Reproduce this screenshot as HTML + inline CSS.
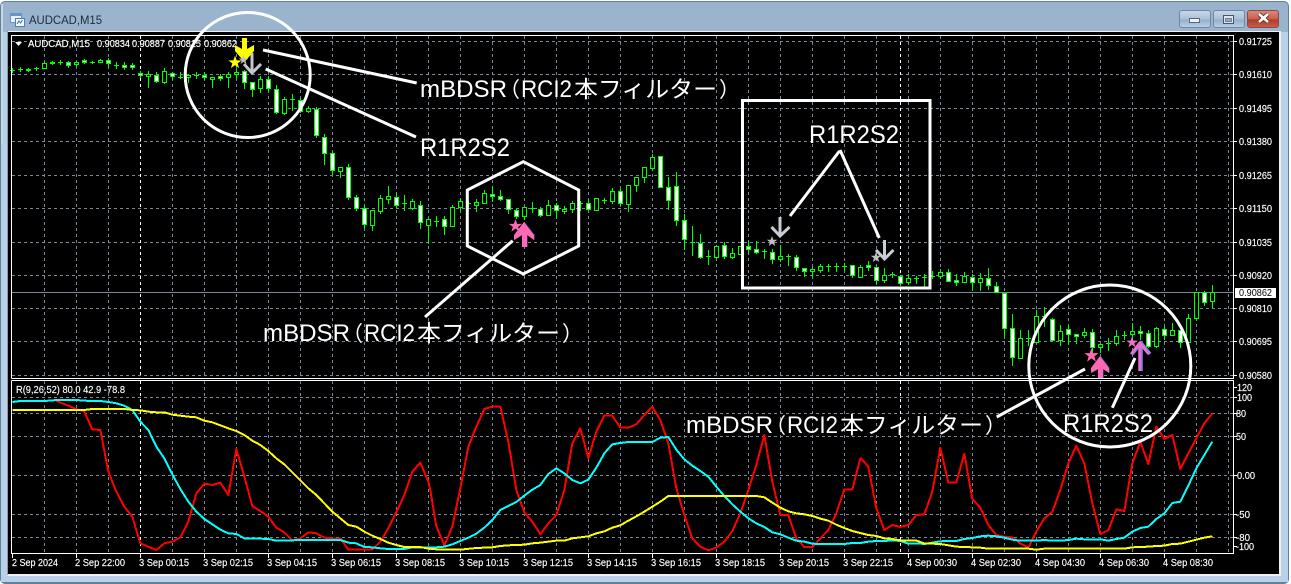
<!DOCTYPE html>
<html lang="ja">
<head>
<meta charset="utf-8">
<title>AUDCAD,M15</title>
<style>
html,body{margin:0;padding:0;width:1291px;height:584px;overflow:hidden;background:#fff}
svg{display:block;position:absolute;left:0;top:0}
.t{font-family:"Liberation Sans",sans-serif;font-size:10px;fill:#fff;stroke:#fff;stroke-width:.15px}
.a{font-family:"Liberation Sans","Noto Sans CJK JP",sans-serif;fill:#fff}
</style>
</head>
<body>
<svg width="1291" height="584" viewBox="0 0 1291 584" xmlns="http://www.w3.org/2000/svg">
<defs>
<linearGradient id="tb" x1="0" y1="0" x2="0" y2="1"><stop offset="0" stop-color="#9ab3cd"/><stop offset="1" stop-color="#b6cfe9"/></linearGradient>
<linearGradient id="bn" x1="0" y1="0" x2="0" y2="1"><stop offset="0" stop-color="#c9d9ea"/><stop offset=".5" stop-color="#aabfd6"/><stop offset=".55" stop-color="#97afc9"/><stop offset="1" stop-color="#b9d0e8"/></linearGradient>
<linearGradient id="cl" x1="0" y1="0" x2="0" y2="1"><stop offset="0" stop-color="#dc8a7c"/><stop offset=".5" stop-color="#c9604e"/><stop offset=".55" stop-color="#b23a26"/><stop offset="1" stop-color="#c8604a"/></linearGradient>
<clipPath id="mp"><rect x="12" y="36" width="1221" height="342"/></clipPath>
</defs>

<!-- window frame -->
<rect x="0" y="1" width="1289" height="583" rx="5" fill="#5f8296"/>
<rect x="1" y="2" width="1287" height="580" rx="4" fill="url(#tb)"/>
<rect x="1" y="32" width="1287" height="550" fill="#b8d0ea"/>
<rect x="1" y="4" width="2" height="140" fill="#c9d6e3"/>
<rect x="7" y="31" width="1274" height="545" fill="#f0f0f0"/>
<rect x="7" y="31" width="1" height="544" fill="#8a9aa8"/>
<rect x="8" y="32" width="1271" height="542" fill="#000"/>

<!-- title icon -->
<rect x="10.500" y="13.500" width="11" height="9" fill="#e8f0fa" stroke="#6d93c4"/>
<rect x="11" y="14" width="10" height="2" fill="#6d93c4"/>
<rect x="15.500" y="18.500" width="9" height="8" fill="#f4f8fd" stroke="#4f7db8"/>
<path d="M17 24l2-3 1.500 2 2-3" fill="none" stroke="#3b6fb0"/>
<text x="29" y="24" font-family="Liberation Sans,sans-serif" font-size="12" fill="#1c2b3a" textLength="73" lengthAdjust="spacingAndGlyphs">AUDCAD,M15</text>

<!-- window buttons -->
<rect x="1179.500" y="10.500" width="31" height="17" rx="2.500" fill="url(#bn)" stroke="#6e88a3"/>
<rect x="1189.500" y="18.500" width="10" height="4" fill="#eef2f6" stroke="#55677a"/>
<rect x="1213.500" y="10.500" width="31" height="17" rx="2.500" fill="url(#bn)" stroke="#6e88a3"/>
<rect x="1223.500" y="15.500" width="10" height="8" fill="#dde6ef" stroke="#44566a"/>
<rect x="1225.500" y="18.500" width="6" height="3" fill="#93a9c0" stroke="#44566a" stroke-width=".6"/>
<rect x="1247.500" y="10.500" width="31" height="17" rx="2.500" fill="url(#cl)" stroke="#8a4a44"/>
<path d="M1259 14l9 8M1268 14l-9 8" stroke="#6b2a22" stroke-width="4.500"/>
<path d="M1259 14l9 8M1268 14l-9 8" stroke="#fff" stroke-width="2.600"/>

<!-- grid -->
<g fill="none" stroke="#778899" stroke-width="1" stroke-dasharray="3 3" shape-rendering="crispEdges">
<path d="M12 41.500H1233M12 74.500H1233M12 108.500H1233M12 141.500H1233M12 175.500H1233M12 208.500H1233M12 242.500H1233M12 275.500H1233M12 308.500H1233M12 341.500H1233M12 375.500H1233M12 397.500H1233M12 413.500H1233M12 436.500H1233M12 475.500H1233M12 514.500H1233M12 537.500H1233"/>
<path d="M44.500 36V378M76.500 36V378M108.500 36V378M172.500 36V378M204.500 36V378M236.500 36V378M268.500 36V378M300.500 36V378M332.500 36V378M364.500 36V378M396.500 36V378M428.500 36V378M460.500 36V378M492.500 36V378M524.500 36V378M556.500 36V378M588.500 36V378M620.500 36V378M652.500 36V378M684.500 36V378M716.500 36V378M748.500 36V378M780.500 36V378M812.500 36V378M844.500 36V378M876.500 36V378M908.500 36V378M940.500 36V378M972.500 36V378M1004.500 36V378M1036.500 36V378M1068.500 36V378M1100.500 36V378M1132.500 36V378M1164.500 36V378M1196.500 36V378M1228.500 36V378"/>
<path d="M44.500 381V553M76.500 381V553M108.500 381V553M172.500 381V553M204.500 381V553M236.500 381V553M268.500 381V553M300.500 381V553M332.500 381V553M364.500 381V553M396.500 381V553M428.500 381V553M460.500 381V553M492.500 381V553M524.500 381V553M556.500 381V553M588.500 381V553M620.500 381V553M652.500 381V553M684.500 381V553M716.500 381V553M748.500 381V553M780.500 381V553M812.500 381V553M844.500 381V553M876.500 381V553M908.500 381V553M940.500 381V553M972.500 381V553M1004.500 381V553M1036.500 381V553M1068.500 381V553M1100.500 381V553M1132.500 381V553M1164.500 381V553M1196.500 381V553M1228.500 381V553"/>
<path stroke="#fff" d="M140.500 36V378M140.500 381V553M900.500 36V378M900.500 381V553"/>
</g>
<path d="M12 292.500H1233" stroke="#778899" shape-rendering="crispEdges"/>

<!-- candles -->
<g shape-rendering="crispEdges" stroke="#0f0" stroke-width="1">
<path fill="none" d="M12.500 68V73M20.500 67V72M28.500 68V72M36.500 67V71M44.500 62V69M52.500 61V65M60.500 60V65M68.500 61V68M76.500 61V66M84.500 59V64M92.500 61V64M100.500 59V63M108.500 58V68M116.500 62V69M124.500 62V70M132.500 63V70M140.500 71V78M148.500 71V88M156.500 72V83M164.500 68V84M172.500 72V80M180.500 72V79M188.500 74V83M196.500 72V79M204.500 72V80M212.500 77V88M220.500 74V81M228.500 72V88M236.500 69V79M244.500 70V89M252.500 82V97M260.500 76V93M268.500 76V91M276.500 85V114M284.500 97V115M292.500 94V111M300.500 98V113M308.500 106V113M316.500 107V138M324.500 134V165M332.500 152V174M340.500 167V178M348.500 164V200M356.500 195V211M364.500 205V229M372.500 210V231M380.500 195V214M388.500 186V204M396.500 193V208M404.500 195V211M412.500 199V210M420.500 201V229M428.500 219V244M436.500 216V227M444.500 216V235M452.500 205V227M460.500 198V211M468.500 201V207M476.500 199V212M484.500 190V204M492.500 186V202M500.500 190V201M508.500 199V214M516.500 209V219M524.500 207V220M532.500 202V213M540.500 207V217M548.500 200V216M556.500 203V218M564.500 206V214M572.500 201V213M580.500 201V211M588.500 200V211M596.500 198V211M604.500 198V204M612.500 188V204M620.500 189V206M628.500 185V212M636.500 177V192M644.500 167V183M652.500 154V171M660.500 156V188M668.500 177V210M676.500 172V226M684.500 214V250M692.500 226V256M700.500 234V259M708.500 250V265M716.500 245V259M724.500 242V259M732.500 248V259M740.500 246V255M748.500 241V254M756.500 241V254M764.500 249V259M772.500 249V264M780.500 245V262M788.500 254V266M796.500 255V271M804.500 268V277M812.500 267V277M820.500 264V273M828.500 264V272M836.500 263V272M844.500 263V271M852.500 265V278M860.500 265V278M868.500 261V271M876.500 267V284M884.500 268V283M892.500 272V278M900.500 275V286M908.500 274V285M916.500 276V284M924.500 274V288M932.500 271V279M940.500 269V279M948.500 269V282M956.500 274V286M964.500 272V283M972.500 274V291M980.500 273V291M988.500 268V290M996.500 282V293M1004.500 293V338M1012.500 314V366M1020.500 330V359M1028.500 330V346M1036.500 310V343M1044.500 307V327M1052.500 318V342M1060.500 325V346M1068.500 325V345M1076.500 334V344M1084.500 328V338M1092.500 329V353M1100.500 344V353M1108.500 338V351M1116.500 330V346M1124.500 331V340M1132.500 323V340M1140.500 326V340M1148.500 330V348M1156.500 327V348M1164.500 327V340M1172.500 323V336M1180.500 330V348M1188.500 314V343M1196.500 292V321M1204.500 291V306M1212.500 285V308"/>
<path fill="none" d="M10 70.500h5M18 69.500h5M34 68.500h5M58 62.500h5M90 62.500h5M114 65.500h5M178 77.500h5M194 75.500h5M290 99.500h5M402 203.500h5M434 221.500h5M466 203.500h5M530 208.500h5M578 203.500h5M602 200.500h5M690 242.500h5M706 256.500h5M762 251.500h5M786 256.500h5M826 266.500h5M834 266.500h5M842 266.500h5M890 274.500h5M914 278.500h5M922 277.500h5M930 276.500h5M1026 338.500h5M1042 316.500h5M1106 343.500h5M1122 335.500h5"/>
<path fill="#000" d="M42.500 63.500h4V68.500h-4zM74.500 62.500h4V64.500h-4zM98.500 60.500h4V62.500h-4zM146.500 74.500h4V76.500h-4zM162.500 71.500h4V82.500h-4zM186.500 75.500h4V77.500h-4zM210.500 77.500h4V79.500h-4zM226.500 74.500h4V77.500h-4zM234.500 72.500h4V74.500h-4zM258.500 79.500h4V88.500h-4zM282.500 99.500h4V113.500h-4zM306.500 108.500h4V111.500h-4zM338.500 167.500h4V171.500h-4zM370.500 210.500h4V225.500h-4zM378.500 198.500h4V211.500h-4zM386.500 196.500h4V199.500h-4zM410.500 201.500h4V208.500h-4zM426.500 219.500h4V225.500h-4zM450.500 207.500h4V226.500h-4zM458.500 201.500h4V207.500h-4zM474.500 202.500h4V205.500h-4zM482.500 193.500h4V203.500h-4zM522.500 207.500h4V216.500h-4zM546.500 205.500h4V215.500h-4zM562.500 209.500h4V211.500h-4zM570.500 203.500h4V209.500h-4zM594.500 198.500h4V210.500h-4zM610.500 191.500h4V201.500h-4zM626.500 185.500h4V204.500h-4zM634.500 177.500h4V185.500h-4zM642.500 167.500h4V177.500h-4zM650.500 157.500h4V168.500h-4zM714.500 246.500h4V257.500h-4zM730.500 253.500h4V257.500h-4zM738.500 246.500h4V254.500h-4zM778.500 256.500h4V259.500h-4zM810.500 269.500h4V271.500h-4zM818.500 266.500h4V270.500h-4zM858.500 267.500h4V277.500h-4zM882.500 275.500h4V280.500h-4zM906.500 278.500h4V282.500h-4zM938.500 272.500h4V276.500h-4zM962.500 276.500h4V282.500h-4zM978.500 278.500h4V282.500h-4zM1018.500 338.500h4V358.500h-4zM1034.500 316.500h4V342.500h-4zM1058.500 331.500h4V340.500h-4zM1082.500 332.500h4V335.500h-4zM1098.500 344.500h4V347.500h-4zM1114.500 336.500h4V343.500h-4zM1130.500 331.500h4V334.500h-4zM1154.500 328.500h4V346.500h-4zM1170.500 330.500h4V335.500h-4zM1186.500 318.500h4V342.500h-4zM1194.500 292.500h4V318.500h-4zM1210.500 292.500h4V301.500h-4z"/>
<path fill="#fff" d="M26.500 69.500h4V70.500h-4zM50.500 62.500h4V63.500h-4zM66.500 62.500h4V65.500h-4zM82.500 60.500h4V62.500h-4zM106.500 60.500h4V63.500h-4zM122.500 65.500h4V67.500h-4zM130.500 65.500h4V67.500h-4zM138.500 73.500h4V75.500h-4zM154.500 75.500h4V81.500h-4zM170.500 73.500h4V76.500h-4zM202.500 75.500h4V77.500h-4zM218.500 76.500h4V78.500h-4zM242.500 71.500h4V82.500h-4zM250.500 82.500h4V89.500h-4zM266.500 79.500h4V88.500h-4zM274.500 89.500h4V112.500h-4zM298.500 100.500h4V111.500h-4zM314.500 109.500h4V135.500h-4zM322.500 137.500h4V153.500h-4zM330.500 153.500h4V170.500h-4zM346.500 167.500h4V197.500h-4zM354.500 197.500h4V208.500h-4zM362.500 208.500h4V224.500h-4zM394.500 197.500h4V205.500h-4zM418.500 205.500h4V222.500h-4zM442.500 219.500h4V226.500h-4zM490.500 194.500h4V196.500h-4zM498.500 196.500h4V199.500h-4zM506.500 199.500h4V209.500h-4zM514.500 210.500h4V216.500h-4zM538.500 209.500h4V215.500h-4zM554.500 205.500h4V210.500h-4zM586.500 203.500h4V209.500h-4zM618.500 191.500h4V203.500h-4zM658.500 156.500h4V187.500h-4zM666.500 187.500h4V200.500h-4zM674.500 186.500h4V220.500h-4zM682.500 220.500h4V239.500h-4zM698.500 243.500h4V257.500h-4zM722.500 245.500h4V256.500h-4zM746.500 246.500h4V249.500h-4zM754.500 249.500h4V252.500h-4zM770.500 252.500h4V259.500h-4zM794.500 257.500h4V267.500h-4zM802.500 268.500h4V271.500h-4zM850.500 265.500h4V275.500h-4zM866.500 265.500h4V267.500h-4zM874.500 267.500h4V280.500h-4zM898.500 276.500h4V283.500h-4zM946.500 272.500h4V281.500h-4zM954.500 280.500h4V282.500h-4zM970.500 277.500h4V282.500h-4zM986.500 278.500h4V285.500h-4zM994.500 286.500h4V292.500h-4zM1002.500 293.500h4V328.500h-4zM1010.500 328.500h4V357.500h-4zM1050.500 319.500h4V340.500h-4zM1066.500 329.500h4V334.500h-4zM1074.500 334.500h4V336.500h-4zM1090.500 332.500h4V347.500h-4zM1138.500 331.500h4V333.500h-4zM1146.500 333.500h4V346.500h-4zM1162.500 329.500h4V335.500h-4zM1178.500 330.500h4V342.500h-4zM1202.500 292.500h4V302.500h-4z"/>
</g>

<!-- indicator lines -->
<g fill="none" stroke-width="6" stroke-linejoin="round" shape-rendering="crispEdges">
<g stroke="#f00">
<polyline transform="translate(0 375) scale(.33333)" points="165,76 205,92 230,103 252,108 277,163 301,165 325,290 349,350 373,395 397,425 421,505 445,515 469,525 493,505 517,500 541,487 565,440 589,355 613,326 637,330 661,323 685,360 709,222 733,305 757,393 781,408 805,425 829,458 853,472 877,496 901,490 925,472 949,475 973,488 997,490 1021,490 1045,524 1069,524 1093,524 1117,524 1141,500 1165,460 1189,412 1213,360 1237,290 1261,263 1285,320 1291,345"/>
<polyline transform="translate(430 375) scale(.33333)" points="1,345 18,450 43,512 67,455 91,340 115,215 139,155 163,102 187,95 211,95 235,200 259,345 283,412 307,440 331,478 355,445 379,420 403,345 427,205 451,160 475,250 499,170 523,122 547,122 571,158 595,158 619,148 643,120 667,95 691,135 715,205 739,340 763,420 787,490 811,515 835,526 859,518 883,500 907,468 931,415 955,345 979,270 1003,180 1027,320 1051,420 1075,420 1099,490 1123,516 1147,516 1171,490 1195,465 1219,415 1243,343 1267,343 1291,250"/>
<polyline transform="translate(860 375) scale(.33333)" points="1,248 25,275 49,400 73,465 97,450 121,456 145,450 169,420 193,418 217,350 241,218 265,323 289,323 313,236 337,372 361,398 385,450 409,480 433,485 457,487 481,505 505,518 529,470 553,430 577,410 601,345 625,265 649,212 673,265 697,385 721,478 745,466 769,403 793,408 817,265 841,200 865,267 889,155 913,192 937,180 961,283 985,235 1009,190 1033,145 1057,115"/>
</g>
<g stroke="#0ff">
<polyline transform="translate(0 375) scale(.33333)" points="37,81 61,78 85,78 109,78 133,78 157,76 181,75 205,75 229,75 253,77 277,78 301,78 325,81 349,85 373,92 397,105 421,140 445,165 469,215 493,250 517,298 541,342 565,380 589,410 613,432 637,448 661,464 685,475 709,477 733,490 757,491 781,491 805,492 829,497 853,497 877,496 901,495 925,495 949,495 973,495 997,495 1021,495 1045,503 1069,505 1093,516 1117,517 1141,520 1165,522 1189,522 1213,522 1237,517 1261,517 1291,517"/>
<polyline transform="translate(430 375) scale(.33333)" points="1,517 19,517 43,515 67,508 91,498 115,488 139,476 163,458 187,435 211,405 235,393 259,381 283,362 307,344 331,330 355,297 379,280 403,295 427,315 451,325 475,314 499,278 523,235 547,208 571,204 595,201 619,201 643,201 667,201 691,188 715,186 739,224 763,253 787,272 811,288 835,305 859,335 883,363 907,388 931,410 955,430 979,445 1003,456 1027,472 1051,478 1075,488 1099,497 1123,500 1147,506 1171,507 1195,507 1219,507 1243,507 1267,504 1291,504"/>
<polyline transform="translate(860 375) scale(.33333)" points="1,504 25,500 49,498 73,498 97,496 121,498 145,506 169,505 193,507 217,503 241,499 265,498 289,498 313,492 337,489 361,484 385,482 409,484 433,488 457,494 481,497 505,497 529,497 553,495 577,497 601,497 625,495 649,491 673,493 697,493 721,493 745,497 769,492 793,488 817,470 841,459 865,455 889,432 913,415 937,384 961,380 985,332 1009,280 1033,240 1057,200"/>
</g>
<g stroke="#ff0">
<polyline transform="translate(0 375) scale(.33333)" points="37,105 253,105 277,102 373,102 397,105 421,106 445,110 469,112 493,112 517,119 541,122 565,125 589,127 613,137 637,142 661,151 685,160 709,168 733,180 757,197 781,210 805,228 829,250 853,268 877,292 901,316 925,340 949,360 973,385 997,410 1021,430 1045,450 1069,455 1093,470 1117,482 1141,492 1165,503 1189,510 1213,516 1261,516 1291,522"/>
<polyline transform="translate(430 375) scale(.33333)" points="1,522 43,524 91,524 139,519 187,517 211,513 235,511 283,509 307,505 331,503 355,500 379,497 403,497 427,490 451,487 475,484 499,475 523,469 547,458 571,451 595,437 619,424 643,410 667,395 691,380 715,363 979,363 1003,367 1027,383 1051,398 1075,409 1099,415 1123,418 1147,423 1171,431 1195,437 1219,449 1243,459 1267,468 1291,474"/>
<polyline transform="translate(860 375) scale(.33333)" points="1,474 25,480 49,483 73,490 97,492 121,496 145,497 169,497 193,505 217,506 241,507 265,511 289,515 313,516 337,517 361,518 385,521 505,521 529,524 553,521 793,521 817,517 841,516 865,515 889,513 913,512 937,507 961,506 985,500 1009,494 1033,488 1057,484"/>
</g>
</g>

<!-- chart frame -->
<g fill="none" stroke="#fff" stroke-width="1" shape-rendering="crispEdges">
<path d="M11.500 378.500V35.500H1233.500V378.500H11.500M11.500 380.500H1233.500V553.500H11.500V380.500"/>
<path d="M1234 41.500h3M1234 74.500h3M1234 108.500h3M1234 141.500h3M1234 175.500h3M1234 208.500h3M1234 242.500h3M1234 275.500h3M1234 308.500h3M1234 341.500h3M1234 375.500h3M1234 397.500h3M1234 413.500h3M1234 436.500h3M1234 475.500h3M1234 514.500h3M1234 537.500h3M1234 546.500h3M1234 387.500h3"/>
<path d="M12.500 554v4M76.500 554v4M140.500 554v4M204.500 554v4M268.500 554v4M332.500 554v4M396.500 554v4M460.500 554v4M524.500 554v4M588.500 554v4M652.500 554v4M716.500 554v4M780.500 554v4M844.500 554v4M908.500 554v4M972.500 554v4M1036.500 554v4M1100.500 554v4M1164.500 554v4"/>
</g>

<!-- price labels -->
<text class="t" x="1239" y="45" textLength="33" lengthAdjust="spacingAndGlyphs">0.91725</text>
<text class="t" x="1239" y="78" textLength="33" lengthAdjust="spacingAndGlyphs">0.91610</text>
<text class="t" x="1239" y="112" textLength="33" lengthAdjust="spacingAndGlyphs">0.91495</text>
<text class="t" x="1239" y="145" textLength="33" lengthAdjust="spacingAndGlyphs">0.91380</text>
<text class="t" x="1239" y="179" textLength="33" lengthAdjust="spacingAndGlyphs">0.91265</text>
<text class="t" x="1239" y="212" textLength="33" lengthAdjust="spacingAndGlyphs">0.91150</text>
<text class="t" x="1239" y="246" textLength="33" lengthAdjust="spacingAndGlyphs">0.91035</text>
<text class="t" x="1239" y="279" textLength="33" lengthAdjust="spacingAndGlyphs">0.90920</text>
<text class="t" x="1239" y="312" textLength="33" lengthAdjust="spacingAndGlyphs">0.90810</text>
<text class="t" x="1239" y="345" textLength="33" lengthAdjust="spacingAndGlyphs">0.90695</text>
<text class="t" x="1239" y="379" textLength="33" lengthAdjust="spacingAndGlyphs">0.90580</text>
<rect x="1235" y="288" width="41" height="10" fill="#fff"/>
<text x="1239" y="296" font-family="Liberation Sans,sans-serif" font-size="10" fill="#000" textLength="33" lengthAdjust="spacingAndGlyphs">0.90862</text>
<text class="t" x="1237" y="391" textLength="15" lengthAdjust="spacingAndGlyphs">120</text>
<text class="t" x="1237" y="401" textLength="15" lengthAdjust="spacingAndGlyphs">100</text>
<text class="t" x="1236" y="417" textLength="10" lengthAdjust="spacingAndGlyphs">80</text>
<text class="t" x="1236" y="440" textLength="10" lengthAdjust="spacingAndGlyphs">50</text>
<text class="t" x="1237" y="479" textLength="18" lengthAdjust="spacingAndGlyphs">0.00</text>
<text class="t" x="1236" y="518" textLength="14" lengthAdjust="spacingAndGlyphs">-50</text>
<text class="t" x="1236" y="541" textLength="14" lengthAdjust="spacingAndGlyphs">-80</text>
<text class="t" x="1236" y="550" textLength="18" lengthAdjust="spacingAndGlyphs">-100</text>

<!-- time labels -->
<text class="t" x="12" y="566" textLength="46" lengthAdjust="spacingAndGlyphs">2 Sep 2024</text>
<text class="t" x="75" y="566" textLength="50" lengthAdjust="spacingAndGlyphs">2 Sep 22:00</text>
<text class="t" x="139" y="566" textLength="50" lengthAdjust="spacingAndGlyphs">3 Sep 00:15</text>
<text class="t" x="203" y="566" textLength="50" lengthAdjust="spacingAndGlyphs">3 Sep 02:15</text>
<text class="t" x="267" y="566" textLength="50" lengthAdjust="spacingAndGlyphs">3 Sep 04:15</text>
<text class="t" x="331" y="566" textLength="50" lengthAdjust="spacingAndGlyphs">3 Sep 06:15</text>
<text class="t" x="395" y="566" textLength="50" lengthAdjust="spacingAndGlyphs">3 Sep 08:15</text>
<text class="t" x="459" y="566" textLength="50" lengthAdjust="spacingAndGlyphs">3 Sep 10:15</text>
<text class="t" x="523" y="566" textLength="50" lengthAdjust="spacingAndGlyphs">3 Sep 12:15</text>
<text class="t" x="587" y="566" textLength="50" lengthAdjust="spacingAndGlyphs">3 Sep 14:15</text>
<text class="t" x="651" y="566" textLength="50" lengthAdjust="spacingAndGlyphs">3 Sep 16:15</text>
<text class="t" x="715" y="566" textLength="50" lengthAdjust="spacingAndGlyphs">3 Sep 18:15</text>
<text class="t" x="779" y="566" textLength="50" lengthAdjust="spacingAndGlyphs">3 Sep 20:15</text>
<text class="t" x="843" y="566" textLength="50" lengthAdjust="spacingAndGlyphs">3 Sep 22:15</text>
<text class="t" x="907" y="566" textLength="50" lengthAdjust="spacingAndGlyphs">4 Sep 00:30</text>
<text class="t" x="971" y="566" textLength="50" lengthAdjust="spacingAndGlyphs">4 Sep 02:30</text>
<text class="t" x="1035" y="566" textLength="50" lengthAdjust="spacingAndGlyphs">4 Sep 04:30</text>
<text class="t" x="1099" y="566" textLength="50" lengthAdjust="spacingAndGlyphs">4 Sep 06:30</text>
<text class="t" x="1163" y="566" textLength="50" lengthAdjust="spacingAndGlyphs">4 Sep 08:30</text>

<!-- info labels -->
<path d="M15 42h7l-3.500 4z" fill="#fff"/>
<text class="t" x="28" y="47" textLength="62" lengthAdjust="spacingAndGlyphs">AUDCAD,M15</text>
<text class="t" x="97" y="47" textLength="33" lengthAdjust="spacingAndGlyphs">0.90834</text>
<text class="t" x="132" y="47" textLength="33" lengthAdjust="spacingAndGlyphs">0.90887</text>
<text class="t" x="168" y="47" textLength="33" lengthAdjust="spacingAndGlyphs">0.90815</text>
<text class="t" x="204" y="47" textLength="33" lengthAdjust="spacingAndGlyphs">0.90862</text>
<text class="t" x="16" y="393" textLength="109" lengthAdjust="spacingAndGlyphs">R(9,26,52) 80.0 42.9 -78.8</text>

<!-- signals -->
<path d="M242 38H247V49L254 45V51L244.500 62L235 51V45L242 49Z" fill="#ff0"/>
<path transform="translate(235 62.500) scale(7)" fill="#ff0" d="M0-1L.235-.309.951-.309.38.118.588.809 0 .382-.588.809-.38.118-.951-.309-.235-.309Z"/>
<path transform="translate(243.500 60) scale(5)" fill="#c0c0c0" d="M0-1L.235-.309.951-.309.38.118.588.809 0 .382-.588.809-.38.118-.951-.309-.235-.309Z"/>
<path d="M252 53V72M244 64L252 73L261 64" fill="none" stroke="#c4c8ce" stroke-width="3"/>

<path d="M780 217V236M771.500 227L780 236L789.500 227" fill="none" stroke="#c8ccd4" stroke-width="3"/>
<path transform="translate(772 241.500) scale(5.500)" fill="#c0c0c0" d="M0-1L.235-.309.951-.309.38.118.588.809 0 .382-.588.809-.38.118-.951-.309-.235-.309Z"/>
<path d="M884.500 240V259M876 250L884.500 259L893.500 250" fill="none" stroke="#c8ccd4" stroke-width="3"/>
<path transform="translate(876 257.500) scale(5.500)" fill="#c0c0c0" d="M0-1L.235-.309.951-.309.38.118.588.809 0 .382-.588.809-.38.118-.951-.309-.235-.309Z"/>

<g clip-path="url(#mp)">
<path d="M525 222L535 235V240L528 235V247H523V235L515 240V235Z" fill="#303070"/>
<path d="M524 222L534 235V240L527 235V247H522V235L514 240V235Z" fill="#ff69b4"/>
<path transform="translate(515.500 226) scale(7)" fill="#ff69b4" d="M0-1L.235-.309.951-.309.38.118.588.809 0 .382-.588.809-.38.118-.951-.309-.235-.309Z"/>
<path d="M1101 356L1110 368V373L1104 369V380H1099V369L1092 373V368Z" fill="#303070"/>
<path d="M1100 356L1109 368V373L1103 369V380H1098V369L1091 373V368Z" fill="#ff69b4"/>
<path transform="translate(1091.500 355.500) scale(7.500)" fill="#ff69b4" d="M0-1L.235-.309.951-.309.38.118.588.809 0 .382-.588.809-.38.118-.951-.309-.235-.309Z"/>
<path d="M1141 343V371M1132 354L1141 343L1150 354" fill="none" stroke="#8a80f0" stroke-width="3.500"/>
<path d="M1139.500 343V371M1131 354L1139.500 343L1148.500 354" fill="none" stroke="#f070c8" stroke-width="2.500"/>
<path transform="translate(1132 342.500) scale(6)" fill="#f070c8" d="M0-1L.235-.309.951-.309.38.118.588.809 0 .382-.588.809-.38.118-.951-.309-.235-.309Z"/>
</g>

<!-- annotations -->
<g fill="none" stroke="#fff" stroke-width="3">
<circle cx="247.700" cy="75" r="62.500"/>
<circle cx="1109.800" cy="366" r="81"/>
<polygon points="523.300,161.700 578.700,190 578.700,246 523.300,274 467.300,246 467.300,190"/>
<rect x="742.500" y="100.500" width="187.500" height="187.500"/>
<path d="M263 50L416.700 83M265.700 69L416 137M512.700 240.700L425 317M790 216L839.500 151M840 150L879.300 238M996.700 417L1085 369M1112.300 407.700L1135 358"/>
</g>

<text class="a" x="420" y="97" font-size="24" textLength="87" lengthAdjust="spacingAndGlyphs">mBDSR</text>
<text class="a" x="499" y="97" font-size="21">（</text>
<text class="a" x="521" y="97" font-size="24" textLength="51" lengthAdjust="spacingAndGlyphs">RCI2</text>
<text class="a" x="574" y="97" font-size="23" textLength="143" lengthAdjust="spacingAndGlyphs">本フィルター</text>
<text class="a" x="719" y="97" font-size="21">）</text>

<text class="a" x="263" y="341" font-size="24" textLength="87" lengthAdjust="spacingAndGlyphs">mBDSR</text>
<text class="a" x="342" y="341" font-size="21">（</text>
<text class="a" x="364" y="341" font-size="24" textLength="51" lengthAdjust="spacingAndGlyphs">RCI2</text>
<text class="a" x="417" y="341" font-size="23" textLength="143" lengthAdjust="spacingAndGlyphs">本フィルター</text>
<text class="a" x="562" y="341" font-size="21">）</text>

<text class="a" x="686" y="433" font-size="24" textLength="87" lengthAdjust="spacingAndGlyphs">mBDSR</text>
<text class="a" x="765" y="433" font-size="21">（</text>
<text class="a" x="787" y="433" font-size="24" textLength="51" lengthAdjust="spacingAndGlyphs">RCI2</text>
<text class="a" x="840" y="433" font-size="23" textLength="143" lengthAdjust="spacingAndGlyphs">本フィルター</text>
<text class="a" x="985" y="433" font-size="21">）</text>

<text class="a" x="420" y="156" font-size="25" textLength="90" lengthAdjust="spacingAndGlyphs">R1R2S2</text>
<text class="a" x="809" y="143" font-size="25" textLength="90" lengthAdjust="spacingAndGlyphs">R1R2S2</text>
<text class="a" x="1063" y="432" font-size="25" textLength="90" lengthAdjust="spacingAndGlyphs">R1R2S2</text>
</svg>
</body>
</html>
